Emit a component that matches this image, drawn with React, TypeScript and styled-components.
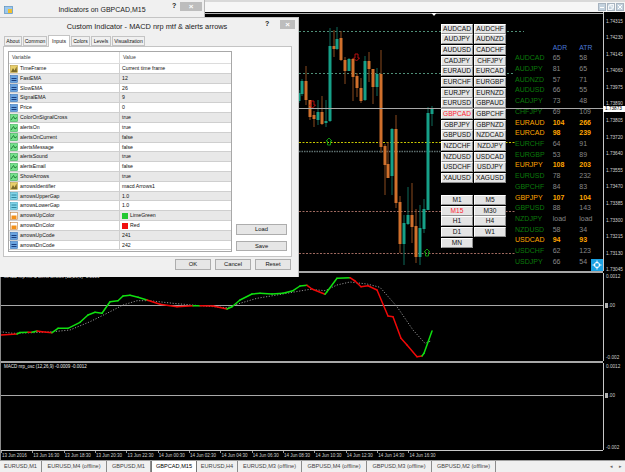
import React from 'react';
import styled, { createGlobalStyle } from 'styled-components';

const GlobalStyle = createGlobalStyle`
  html, body {
    margin: 0;
    padding: 0;
    background: #f0f0f0;
    font-family: "Liberation Sans", Arial, sans-serif;
  }
`;

const Screen = styled.div`
  position: relative;
  width: 625px;
  height: 472px;
  overflow: hidden;
  display: flex;
  flex-direction: column;
  background: #f0f0f0;
`;

const TitleStrip = styled.div`
  height: 12px;
  flex: none;
  display: flex;
  justify-content: flex-end;
  align-items: center;
  gap: 1px;
  padding-right: 1px;
  background: linear-gradient(#d9d9d9 0, #d9d9d9 2px, #f6f6f6 2px);
  box-sizing: border-box;
`;

const WinButton = styled.div`
  width: 8px;
  height: 8px;
  margin-top: 2px;
  background: #c4d2de;
  border: 1px solid #a8b4c0;
  box-sizing: border-box;
  display: flex;
  align-items: center;
  justify-content: center;
`;

const ChartWindow = styled.div`
  flex: 1;
  display: flex;
  flex-direction: column;
  background: #000;
  border-left: 1px solid #8a8a8a;
  min-height: 0;
`;

const Pane = styled.div<{ $h: number }>`
  position: relative;
  display: flex;
  height: ${p => p.$h}px;
  flex: none;
`;

const Plot = styled.svg`
  display: block;
  width: 602px;
  height: 100%;
  flex: none;
`;

const PaneSplit = styled.div`
  height: 2px;
  flex: none;
  background: #a8a8a8;
  margin-right: 22px;
`;

const PriceAxis = styled.div`
  flex: 1;
  border-left: 1px solid #c8c8c8;
  display: flex;
  flex-direction: column;
  gap: 11.6px;
  padding-top: 6.5px;
  color: #d0d0d0;
  font-size: 4.7px;
`;

const PriceLabel = styled.div`
  height: 5px;
  line-height: 5px;
  padding-left: 2px;
  white-space: nowrap;
`;

const IndicatorAxis = styled.div`
  flex: 1;
  border-left: 1px solid #c8c8c8;
  display: flex;
  flex-direction: column;
  padding: 0.5px 0 0 2px;
  color: #d0d0d0;
  font-size: 4.7px;
  line-height: 5px;
  white-space: nowrap;

  span:nth-child(2) {
    margin-top: 24.5px;
    display: flex;
    align-items: center;
    margin-left: -1px;
    gap: 0.5px;
  }
  span:nth-child(2)::before {
    content: '';
    width: 3px;
    height: 5px;
    background: #b0b0b0;
  }
  span:nth-child(3) {
    margin-top: 47px;
  }
`;

const BidBadge = styled.div`
  position: absolute;
  right: 0;
  top: 93.5px;
  width: 22px;
  height: 6px;
  line-height: 6px;
  padding-left: 2px;
  box-sizing: border-box;
  background: #fff;
  color: #000;
  font-size: 4.7px;
`;

const PaneLabel = styled.div`
  position: absolute;
  left: 3px;
  top: 1px;
  color: #e8e8e8;
  font-size: 4.5px;
  line-height: 5px;
  white-space: nowrap;
`;

const TimeAxis = styled.div`
  height: 9px;
  flex: none;
  display: flex;
  margin-right: 22px;
  border-top: 1px solid #c8c8c8;
  box-sizing: content-box;
`;

const TimeLabel = styled.div`
  width: 31.35px;
  flex: none;
  color: #d0d0d0;
  font-size: 4.5px;
  line-height: 9px;
  white-space: nowrap;
  box-sizing: border-box;
  padding-left: 1px;
  background: linear-gradient(#9a9a9a, #9a9a9a) no-repeat left top / 1px 2px;
`;

const TabBar = styled.div`
  height: 12px;
  flex: none;
  display: flex;
  align-items: stretch;
  background: #f0f0f0;
  border-top: 1px solid #a0a0a0;
  box-sizing: border-box;
`;

const Tab = styled.div<{ $w: number; $active?: boolean }>`
  width: ${p => p.$w}px;
  flex: none;
  text-align: center;
  font-size: 5.6px;
  line-height: 11px;
  color: ${p => (p.$active ? '#000' : '#444')};
  box-sizing: border-box;
  white-space: nowrap;
  background: ${p => (p.$active ? '#fff' : 'transparent')};
  border-right: 1px solid #8c8c8c;
  ${p => p.$active && 'border-left: 1px solid #777; border-right: 1px solid #777;'}
`;

const TabArrows = styled.div`
  margin-left: auto;
  display: flex;
  gap: 6px;
  padding-right: 3px;
  color: #666;
  font-size: 5px;
  line-height: 10px;
`;

/* symbol buttons on the chart */
const SymbolPanel = styled.div`
  position: absolute;
  left: 440px;
  top: 11.5px;
  display: grid;
  grid-template-columns: 32px 32px;
  column-gap: 1px;
  grid-auto-rows: 10.7px;
`;

const TimeframePanel = styled(SymbolPanel)`
  top: 183px;
`;

const ChartButton = styled.div<{ $on?: boolean }>`
  box-sizing: border-box;
  margin-bottom: 0.7px;
  background: #e4e4e4;
  border-top: 1px solid #fff;
  border-left: 1px solid #fff;
  border-right: 1px solid #8e8e8e;
  border-bottom: 1px solid #8e8e8e;
  color: ${p => (p.$on ? '#ff2030' : '#111')};
  font-size: 6.6px;
  line-height: 8px;
  text-align: center;
  white-space: nowrap;
`;

/* spread table right of the buttons */
const RangeTable = styled.div`
  position: absolute;
  left: 514px;
  top: 30.5px;
  display: grid;
  grid-template-columns: 37.7px 26.6px 24px;
  grid-auto-rows: 10.72px;
  font-size: 7px;
  line-height: 10.7px;
  white-space: nowrap;
`;

const RangeHead = styled.div`
  color: #4878d8;
  font-size: 6.8px;
`;

const RangeName = styled.div<{ $hot: boolean }>`
  color: ${p => (p.$hot ? '#ffa500' : '#0b7a0b')};
`;

const RangeValue = styled.div<{ $hot: boolean }>`
  color: ${p => (p.$hot ? '#ffa500' : '#888')};
  font-weight: ${p => (p.$hot ? 700 : 400)};
`;

const MoveBadge = styled.div`
  position: absolute;
  left: 590px;
  top: 247px;
  width: 12px;
  height: 12px;
  background: #1ba1e2;
  display: flex;
  align-items: center;
  justify-content: center;
`;

/* dialogs */
const BackDialog = styled.div`
  position: absolute;
  left: 0;
  top: 0;
  width: 205px;
  height: 30px;
  background: #f0f0f0;
  border-right: 1px solid #b8b8b8;
  box-sizing: border-box;
`;

const DialogTitle = styled.div`
  position: relative;
  height: 17px;
  line-height: 19px;
  text-align: center;
  font-size: 7px;
  color: #222;
`;

const CaptionIcon = styled.svg`
  position: absolute;
  left: 4px;
  top: 6px;
`;

const HelpMark = styled.span<{ $left: number }>`
  position: absolute;
  left: ${p => p.$left}px;
  font-weight: 700;
  font-size: 7px;
  line-height: 10px;
  top: 1px;
  color: #222;
`;

const CloseBox = styled.div<{ $left: number; $w: number }>`
  position: absolute;
  top: 2px;
  left: ${p => p.$left}px;
  width: ${p => p.$w}px;
  height: 9px;
  background: #bdbdbd;
  color: #fff;
  font-size: 8px;
  line-height: 9px;
  text-align: center;
  font-weight: 700;
`;

const MainDialog = styled.div`
  position: absolute;
  left: 0;
  top: 17px;
  width: 299px;
  height: 260px;
  background: #f0f0f0;
  border-top: 1px solid #c4c4c4;
  border-right: 1px solid #c4c4c4;
  box-sizing: border-box;
  display: flex;
  flex-direction: column;
  padding: 0 2px 0 3px;
`;

const MainTitle = styled(DialogTitle)`
  height: 18px;
  line-height: 17px;
  font-size: 7.4px;
  margin: 0 -2px 0 -3px;
  padding-right: 4px;
  flex: none;
`;

const TabStrip = styled.div`
  height: 9px;
  flex: none;
  margin-top: 1px;
  display: flex;
  gap: 1px;
  align-items: flex-end;
  padding-left: 1px;
  position: relative;
  z-index: 1;
`;

const DialogTab = styled.div<{ $w: number; $active?: boolean }>`
  width: ${p => p.$w}px;
  height: ${p => (p.$active ? 12 : 10)}px;
  margin-bottom: ${p => (p.$active ? -1 : 0)}px;
  box-sizing: border-box;
  background: ${p => (p.$active ? '#fff' : '#f0f0f0')};
  border: 1px solid #c4c4c4;
  border-bottom: ${p => (p.$active ? 'none' : '1px solid #c4c4c4')};
  font-size: 5.1px;
  line-height: ${p => (p.$active ? 10 : 8)}px;
  text-align: center;
  color: #111;
`;

const TabPage = styled.div`
  width: 289px;
  height: 211px;
  flex: none;
  background: #fff;
  border: 1px solid #c4c4c4;
  box-sizing: border-box;
  display: flex;
  padding: 4px;
  gap: 4px;
`;

const ParamList = styled.div`
  width: 224px;
  flex: none;
  border: 1px solid #a8a8a8;
  box-sizing: border-box;
  display: flex;
  flex-direction: column;
  color: #111;
  font-size: 5.2px;
  overflow: hidden;
`;

const ListHead = styled.div`
  height: 12px;
  flex: none;
  display: grid;
  grid-template-columns: 110px 1fr;
  line-height: 11px;
  color: #444;
  border-bottom: 1px solid #dcdcdc;
  box-sizing: border-box;
`;

const HeadCell = styled.div`
  padding-left: 3px;
  & + & {
    border-left: 1px solid #dcdcdc;
  }
`;

const ParamRow = styled.div<{ $odd: boolean }>`
  height: 9.82px;
  flex: none;
  display: grid;
  grid-template-columns: 110px 1fr;
  line-height: 9.4px;
  background: ${p => (p.$odd ? '#e8e8e8' : '#fff')};
  border-bottom: 1px solid #cfcfcf;
  box-sizing: border-box;
  white-space: nowrap;
`;

const NameCell = styled.div`
  display: flex;
  align-items: center;
  gap: 2px;
  padding-left: 1px;
`;

const ValueCell = styled.div`
  display: flex;
  align-items: center;
  gap: 2px;
  padding-left: 2px;
  border-left: 1px solid #cfcfcf;
`;

const ColorChip = styled.span<{ $c: string }>`
  width: 6px;
  height: 6px;
  background: ${p => p.$c};
`;

const SideButtons = styled.div`
  flex: 1;
  display: flex;
  flex-direction: column;
  justify-content: flex-end;
  gap: 6px;
  padding-bottom: 1px;
`;

const DialogButton = styled.div<{ $w?: number }>`
  width: ${p => (p.$w ? `${p.$w}px` : 'auto')};
  height: 10.5px;
  box-sizing: border-box;
  background: #e6e6e6;
  border: 1px solid #adadad;
  font-size: 5.8px;
  line-height: 8.5px;
  text-align: center;
  color: #111;
`;

const FootRow = styled.div`
  display: flex;
  justify-content: flex-end;
  gap: 4px;
  padding: 2px 5px 0 0;
`;

const symbolRows = [
  ['AUDCAD', 'AUDCHF'], ['AUDJPY', 'AUDNZD'], ['AUDUSD', 'CADCHF'], ['CADJPY', 'CHFJPY'],
  ['EURAUD', 'EURCAD'], ['EURCHF', 'EURGBP'], ['EURJPY', 'EURNZD'], ['EURUSD', 'GBPAUD'],
  ['GBPCAD', 'GBPCHF'], ['GBPJPY', 'GBPNZD'], ['GBPUSD', 'NZDCAD'], ['NZDCHF', 'NZDJPY'],
  ['NZDUSD', 'USDCAD'], ['USDCHF', 'USDJPY'], ['XAUUSD', 'XAGUSD'],
];

const timeframes = ['M1', 'M5', 'M15', 'M30', 'H1', 'H4', 'D1', 'W1', 'MN'];

const ranges: [string, string, string, boolean][] = [
  ['AUDCAD', '65', '58', false], ['AUDJPY', '81', '65', false], ['AUDNZD', '57', '71', false],
  ['AUDUSD', '66', '55', false], ['CADJPY', '73', '48', false], ['CHFJPY', '69', '109', false],
  ['EURAUD', '104', '266', true], ['EURCAD', '98', '239', true], ['EURCHF', '64', '91', false],
  ['EURGBP', '53', '89', false], ['EURJPY', '108', '203', true], ['EURUSD', '78', '232', false],
  ['GBPCHF', '84', '83', false], ['GBPJPY', '107', '104', true], ['GBPUSD', '88', '143', false],
  ['NZDJPY', 'load', 'load', false], ['NZDUSD', '58', '34', false], ['USDCAD', '94', '93', true],
  ['USDCHF', '62', '123', false], ['USDJPY', '66', '54', false],
];

type ParamKind = 'ab' | 'int' | 'bool' | 'dbl' | 'color';

const params: [string, string, ParamKind, string?][] = [
  ['TimeFrame', 'Current time frame', 'ab'],
  ['FastEMA', '12', 'int'],
  ['SlowEMA', '26', 'int'],
  ['SignalEMA', '9', 'int'],
  ['Price', '0', 'int'],
  ['ColorOnSignalCross', 'true', 'bool'],
  ['alertsOn', 'true', 'bool'],
  ['alertsOnCurrent', 'false', 'bool'],
  ['alertsMessage', 'false', 'bool'],
  ['alertsSound', 'true', 'bool'],
  ['alertsEmail', 'false', 'bool'],
  ['ShowArrows', 'true', 'bool'],
  ['arrowsIdentifier', 'macd Arrows1', 'ab'],
  ['arrowsUpperGap', '1.0', 'dbl'],
  ['arrowsLowerGap', '1.0', 'dbl'],
  ['arrowsUpColor', 'LimeGreen', 'color', '#22c832'],
  ['arrowsDnColor', 'Red', 'color', '#f01010'],
  ['arrowsUpCode', '241', 'int'],
  ['arrowsDnCode', '242', 'int'],
];

const tabs: [string, number, boolean?][] = [
  ['EURUSD,M1', 42], ['EURUSD,M4 (offline)', 65], ['GBPUSD,M1', 44], ['GBPCAD,M15', 46, true],
  ['EURUSD,H4', 41], ['EURUSD,M3 (offline)', 64], ['GBPUSD,M4 (offline)', 65],
  ['GBPUSD,M3 (offline)', 65], ['GBPUSD,M2 (offline)', 64],
];

const priceLabels = [
  '1.74315', '1.74230', '1.74145', '1.74060', '1.73975', '1.73890', '1.73805', '1.73720',
  '1.73640', '1.73555', '1.73470', '1.73385', '1.73300', '1.73215', '1.73130', '1.73045',
];

const timeLabels = [
  '13 Jun 2016', '13 Jun 16:30', '13 Jun 18:30', '13 Jun 20:30', '13 Jun 22:30', '14 Jun 00:30',
  '14 Jun 02:30', '14 Jun 04:30', '14 Jun 06:30', '14 Jun 08:30', '14 Jun 10:30', '14 Jun 12:30',
  '14 Jun 14:30', '14 Jun 16:30',
];

// x, wick top, wick bottom, body top, body bottom, up candle
const candles: [number, number, number, number, number, boolean][] = [
  [299, 90, 103, 93, 101, true],
  [302, 79, 96, 81, 94, true],
  [306, 66, 105, 81, 100, false],
  [310, 100, 120, 100, 117, false],
  [314, 111, 127, 115, 119, false],
  [318, 100, 125, 112, 120, true],
  [322, 96, 125, 112, 124, false],
  [326, 100, 127, 121, 123, true],
  [330, 28, 122, 46, 121, true],
  [334, 30, 57, 46, 49, false],
  [337, 27, 50, 39, 49, true],
  [341, 31, 61, 38, 60, false],
  [345, 57, 84, 60, 71, false],
  [349, 58, 71, 59, 71, true],
  [353, 58, 101, 59, 77, false],
  [357, 73, 97, 76, 88, false],
  [361, 78, 103, 88, 101, false],
  [365, 56, 101, 61, 100, true],
  [369, 52, 82, 61, 69, false],
  [373, 69, 104, 69, 87, false],
  [377, 68, 96, 74, 87, true],
  [381, 50, 153, 74, 147, false],
  [385, 144, 195, 146, 165, false],
  [388, 142, 178, 164, 178, false],
  [392, 128, 195, 129, 176, true],
  [396, 115, 208, 129, 203, false],
  [400, 196, 253, 202, 244, false],
  [404, 215, 265, 223, 244, true],
  [408, 187, 225, 215, 224, true],
  [412, 183, 243, 215, 227, false],
  [416, 209, 263, 226, 257, false],
  [420, 205, 265, 228, 257, true],
  [424, 199, 233, 209, 229, true],
  [428, 107, 210, 113, 210, true],
  [432, 106, 126, 109, 114, true],
];

// macd line as [x, y, colour of the segment that ends here]
const g = '#10e010';
const r = '#f00808';
const macd: [number, number, string][] = [
  [0, 335, r], [17, 334, r], [20, 332.5, g], [28, 332.3, g], [32, 332.3, r], [37, 331, g], [42, 331.7, r],
  [52, 332.7, r], [58, 328.3, g], [68, 328.3, g], [80, 322.3, g], [88, 315, g], [95, 312.3, g],
  [102, 313.3, g], [110, 301.7, g], [118, 300.7, g], [123, 296, g], [130, 295.3, g], [138, 297.3, g],
  [147, 300, g], [160, 304.3, r], [177, 306.7, r], [193, 305.7, r], [200, 305.7, g], [213, 306, r],
  [227, 309, r], [232, 306.7, g], [240, 300, g], [252, 294, g], [260, 293.3, g], [272, 294, g],
  [283, 293.3, g], [293, 290.7, g], [300, 286, g], [307, 285.3, g], [312, 289, r], [325, 294.3, r],
  [327, 291.7, g], [337, 278.3, g], [350, 277.7, g], [355, 281, r], [361, 286.7, r], [368, 285.7, r],
  [377, 290, r], [388, 316, r], [393, 316.7, r], [401, 338.3, r], [407, 345, r], [417, 356.7, r],
  [422, 356, r], [424, 353.3, g], [432, 331, g],
];

const signal = [
  [0, 331.7], [13, 333.3], [33, 332.7], [53, 331.7], [70, 330], [90, 321.7], [107, 313.3], [123, 305],
  [137, 300.7], [150, 300.7], [173, 303.3], [200, 305.7], [227, 307.7], [240, 303.3], [257, 298.3],
  [277, 295], [300, 291], [310, 289.3], [325, 290.7], [337, 285], [350, 282], [367, 284], [380, 287.3],
  [397, 306.7], [413, 330], [425, 343.3], [431, 341],
];

function ParamIcon({ kind }: { kind: ParamKind }) {
  if (kind === 'ab') {
    return (
      <svg width="8" height="8" viewBox="0 0 8 8">
        <rect x="0.5" y="0.5" width="7" height="7" fill="#e8cf6a" stroke="#b89a3a" strokeWidth="0.6" />
        <path d="M1 7 L3 3 L4.5 5.5 L6.5 1.5 L7 7 Z" fill="#7a6a2a" />
      </svg>
    );
  }
  if (kind === 'int') {
    return (
      <svg width="8" height="8" viewBox="0 0 8 8">
        <rect x="0.5" y="0.5" width="7" height="7" fill="#6aa4e0" stroke="#3a74b8" strokeWidth="0.6" />
        <path d="M1.5 3.5 H6.5 M1.5 5.5 H6.5" stroke="#1c3f80" strokeWidth="1" />
      </svg>
    );
  }
  if (kind === 'bool') {
    return (
      <svg width="8" height="8" viewBox="0 0 8 8">
        <rect x="0.5" y="0.5" width="7" height="7" fill="#74e08a" stroke="#3ab058" strokeWidth="0.6" />
        <path d="M1 6 L3.5 2.5 L5 5 L7 3.5" stroke="#116a2a" strokeWidth="0.8" fill="none" />
      </svg>
    );
  }
  if (kind === 'dbl') {
    return (
      <svg width="8" height="8" viewBox="0 0 8 8">
        <rect x="0.5" y="0.5" width="7" height="7" fill="#7fd4e8" stroke="#48a8c4" strokeWidth="0.6" />
        <path d="M1.5 3 H6.5 M1.5 5.5 H6.5" stroke="#2a7a94" strokeWidth="0.9" />
      </svg>
    );
  }
  return (
    <svg width="8" height="8" viewBox="0 0 8 8">
      <rect x="0.5" y="0.5" width="7" height="7" fill="#fff" stroke="#c08040" strokeWidth="0.6" />
      <rect x="1.5" y="3.5" width="5" height="3.5" fill="#f29018" />
    </svg>
  );
}

function Candle({ x, wt, wb, bt, bb, up }: { x: number; wt: number; wb: number; bt: number; bb: number; up: boolean }) {
  const body = up ? '#16a088' : '#d0702c';
  const wick = up ? '#0e6a5a' : '#8a4a1e';
  return (
    <g>
      <rect x={x - 0.5} y={wt} width={1} height={wb - wt} fill={wick} />
      <rect x={x - 1.5} y={bt} width={3} height={Math.max(bb - bt, 1)} fill={body} />
    </g>
  );
}

function CandleChart() {
  return (
    <Plot viewBox="1 12 602 259" preserveAspectRatio="none">
      <line x1="205" x2="603" y1="13.5" y2="13.5" stroke="#b0b0b0" />
      <line x1="299" x2="524" y1="31.5" y2="31.5" stroke="#4f8f78" strokeDasharray="2 2" />
      <line x1="299" x2="515" y1="73.5" y2="73.5" stroke="#4f8f78" strokeDasharray="2 2" />
      <line x1="299" x2="515" y1="142.5" y2="142.5" stroke="#c8c800" strokeDasharray="2 1.5" />
      <line x1="299" x2="441" y1="151.5" y2="151.5" stroke="#5f7070" strokeDasharray="1.5 1" strokeWidth="1.5" />
      <line x1="299" x2="515" y1="211.5" y2="211.5" stroke="#a06a60" strokeDasharray="2 1.5" />
      <line x1="299" x2="515" y1="253.5" y2="253.5" stroke="#a06a60" strokeDasharray="2 1.5" />
      {candles.map(([x, wt, wb, bt, bb, up]) => (
        <Candle key={x} x={x} wt={wt} wb={wb} bt={bt} bb={bb} up={up} />
      ))}
      <line x1="299" x2="603" y1="108.5" y2="108.5" stroke="#a8a8a8" />
      <path d="M431.5 13 h5 l-2.5 3 z" fill="#fff" />
      <path d="M355 54 h3 v4 h1.5 l-3 3 l-3 -3 h1.5 z" fill="none" stroke="#c81010" strokeWidth="0.9" />
      <path d="M311 101 h3 v4 h1.5 l-3 3 l-3 -3 h1.5 z" fill="none" stroke="#c81010" strokeWidth="0.9" />
      <path d="M327.5 145 h3 v-4 h1.5 l-3 -3 l-3 3 h1.5 z" fill="none" stroke="#12a012" strokeWidth="0.9" />
      <path d="M425.5 256 h3 v-4 h1.5 l-3 -3 l-3 3 h1.5 z" fill="none" stroke="#12a012" strokeWidth="0.9" />
    </Plot>
  );
}

function MacdChart() {
  return (
    <Plot viewBox="1 273 602 88" preserveAspectRatio="none">
      <line x1="0" x2="603" y1="305.5" y2="305.5" stroke="#a8a8a8" />
      <polyline
        points={signal.map(p => p.join(',')).join(' ')}
        fill="none"
        stroke="#8f8f8f"
        strokeWidth="1"
        strokeDasharray="1.2 1.6"
      />
      {macd.slice(1).map(([x, y, c], i) => (
        <line key={x} x1={macd[i][0]} y1={macd[i][1]} x2={x} y2={y} stroke={c} strokeWidth="1.5" strokeLinecap="round" />
      ))}
    </Plot>
  );
}

function OscChart() {
  return (
    <Plot viewBox="1 363 602 87" preserveAspectRatio="none">
      <line x1="0" x2="603" y1="395.5" y2="395.5" stroke="#a8a8a8" />
    </Plot>
  );
}

export default function App() {
  return (
    <Screen>
      <GlobalStyle />
      <TitleStrip>
        <WinButton>
          <svg width="4" height="2" viewBox="0 0 4 2"><rect width="4" height="1" y="1" fill="#fff" /></svg>
        </WinButton>
        <WinButton>
          <svg width="6" height="6" viewBox="0 0 6 6" fill="none" stroke="#fff" strokeWidth="0.8">
            <rect x="2" y="0.5" width="3.5" height="3.5" />
            <rect x="0.5" y="2" width="3.5" height="3.5" fill="#c4d2de" />
          </svg>
        </WinButton>
        <WinButton>
          <svg width="6" height="6" viewBox="0 0 6 6" stroke="#fff" strokeWidth="1">
            <path d="M1 1 L5 5 M5 1 L1 5" />
          </svg>
        </WinButton>
      </TitleStrip>
      <ChartWindow>
        <Pane $h={259}>
          <CandleChart />
          <PriceAxis>
            {priceLabels.map(l => (
              <PriceLabel key={l}>{l}</PriceLabel>
            ))}
          </PriceAxis>
          <BidBadge>1.73873</BidBadge>
          <SymbolPanel>
            {symbolRows.flat().map(s => (
              <ChartButton key={s} $on={s === 'GBPCAD'}>{s}</ChartButton>
            ))}
          </SymbolPanel>
          <TimeframePanel>
            {timeframes.map(t => (
              <ChartButton key={t} $on={t === 'M15'}>{t}</ChartButton>
            ))}
          </TimeframePanel>
          <RangeTable>
            <div />
            <RangeHead>ADR</RangeHead>
            <RangeHead>ATR</RangeHead>
            {ranges.map(([name, adr, atr, hot]) => (
              <React.Fragment key={name}>
                <RangeName $hot={hot}>{name}</RangeName>
                <RangeValue $hot={hot}>{adr}</RangeValue>
                <RangeValue $hot={hot}>{atr}</RangeValue>
              </React.Fragment>
            ))}
          </RangeTable>
          <MoveBadge>
            <svg width="10" height="10" viewBox="0 0 10 10" fill="none" stroke="#fff" strokeWidth="1">
              <circle cx="5" cy="5" r="2.6" />
              <path d="M5 0.5 V3.5 M5 6.5 V9.5 M0.5 5 H3.5 M6.5 5 H9.5" />
            </svg>
          </MoveBadge>
        </Pane>
        <PaneSplit />
        <Pane $h={88}>
          <MacdChart />
          <IndicatorAxis>
            <span>0.0012</span>
            <span>.00</span>
            <span>-0.002</span>
          </IndicatorAxis>
          <PaneLabel>MACD nrp mtf &amp; alerts arrows (12,26,9) -0.0009</PaneLabel>
        </Pane>
        <PaneSplit />
        <Pane $h={87}>
          <OscChart />
          <IndicatorAxis>
            <span>0.0012</span>
            <span>.00</span>
            <span>-0.002</span>
          </IndicatorAxis>
          <PaneLabel>MACD nrp_osc (12,26,9) -0.0009 -0.0012</PaneLabel>
        </Pane>
        <TimeAxis>
          {timeLabels.map(t => (
            <TimeLabel key={t}>{t}</TimeLabel>
          ))}
        </TimeAxis>
      </ChartWindow>
      <TabBar>
        {tabs.map(([name, w, active]) => (
          <Tab key={name} $w={w} $active={active}>{name}</Tab>
        ))}
        <TabArrows>
          <span>◂</span>
          <span>▸</span>
        </TabArrows>
      </TabBar>

      <BackDialog>
        <DialogTitle>
          <CaptionIcon width="9" height="8" viewBox="0 0 9 8">
            <rect x="0.5" y="0.5" width="8" height="7" fill="#9cc8ec" stroke="#5a90c0" strokeWidth="0.7" />
            <rect x="4" y="3" width="4" height="4" fill="#f0c030" />
          </CaptionIcon>
          Indicators on GBPCAD,M15
          <HelpMark $left={172}>?</HelpMark>
          <CloseBox $left={180} $w={22}>×</CloseBox>
        </DialogTitle>
      </BackDialog>

      <MainDialog>
        <MainTitle>
          Custom Indicator - MACD nrp mtf &amp; alerts arrows
          <HelpMark $left={265}>?</HelpMark>
          <CloseBox $left={280} $w={15}>×</CloseBox>
        </MainTitle>
        <TabStrip>
          <DialogTab $w={18}>About</DialogTab>
          <DialogTab $w={24}>Common</DialogTab>
          <DialogTab $w={22} $active>Inputs</DialogTab>
          <DialogTab $w={19}>Colors</DialogTab>
          <DialogTab $w={20}>Levels</DialogTab>
          <DialogTab $w={33}>Visualization</DialogTab>
        </TabStrip>
        <TabPage>
          <ParamList>
            <ListHead>
              <HeadCell>Variable</HeadCell>
              <HeadCell>Value</HeadCell>
            </ListHead>
            {params.map(([name, value, kind, chip], i) => (
              <ParamRow key={name} $odd={i % 2 === 1}>
                <NameCell>
                  <ParamIcon kind={kind} />
                  {name}
                </NameCell>
                <ValueCell>
                  {chip && <ColorChip $c={chip} />}
                  {value}
                </ValueCell>
              </ParamRow>
            ))}
          </ParamList>
          <SideButtons>
            <DialogButton>Load</DialogButton>
            <DialogButton>Save</DialogButton>
          </SideButtons>
        </TabPage>
        <FootRow>
          <DialogButton $w={36}>OK</DialogButton>
          <DialogButton $w={36}>Cancel</DialogButton>
          <DialogButton $w={36}>Reset</DialogButton>
        </FootRow>
      </MainDialog>
    </Screen>
  );
}
